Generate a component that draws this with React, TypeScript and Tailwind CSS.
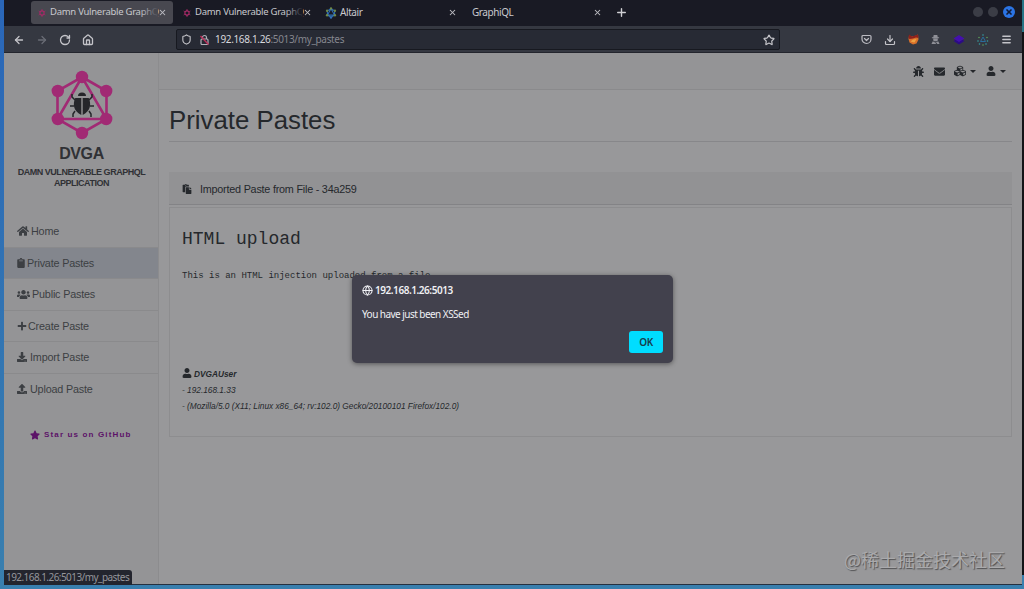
import type { ReactNode } from 'react';
import {
  FaBug,
  FaClipboard,
  FaCubes,
  FaDownload,
  FaEnvelope,
  FaHome,
  FaPaste,
  FaPlus,
  FaStar,
  FaUpload,
  FaUser,
  FaUsers,
} from 'react-icons/fa';
import { ArrowLeft, ArrowRight, Download, Globe, House, Menu, Plus, RotateCw, Shield, Star, X } from 'lucide-react';

const GraphMark = ({ size, colors }: { size: number; colors: string[] }) => (
  <svg width={size} height={size} viewBox="0 0 20 20" fill="none" stroke={colors[0]} strokeWidth="1.8">
    <path d="M10 3 16 6.5v7L10 17l-6-3.5v-7zM10 3 4 13.5h12z" />
    <g stroke="none">
      <circle cx="10" cy="2.5" r="2" fill={colors[1]} />
      <circle cx="16.5" cy="6.2" r="2" fill={colors[1]} />
      <circle cx="16.5" cy="13.8" r="2" fill={colors[1]} />
      <circle cx="10" cy="17.5" r="2" fill={colors[0]} />
      <circle cx="3.5" cy="13.8" r="2" fill={colors[1]} />
      <circle cx="3.5" cy="6.2" r="2" fill={colors[1]} />
    </g>
  </svg>
);

const HexDot = () => (
  <svg width="8" height="8" viewBox="0 0 20 20" fill="none" stroke="#a32a66" strokeWidth="3.2">
    <path d="M10 4 15 7v6l-5 3-5-3V7z" />
    <path d="M10 0v3M18.5 5l-3 2M18.5 15l-3-2M10 20v-3M1.5 15l3-2M1.5 5l3 2" strokeWidth="2" />
  </svg>
);

interface TabProps {
  title: string;
  icon?: ReactNode;
  active?: boolean;
  fade?: boolean;
}

const Tab = ({ title, icon, active, fade }: TabProps) => (
  <div className={`flex items-center w-[142px] h-[23px] mr-[3px] px-[6px] rounded-[3px] ${active ? 'bg-[#484850]' : ''}`}>
    {icon && <span className="w-[13px] shrink-0">{icon}</span>}
    <span className={`relative flex-1 min-w-0 whitespace-nowrap text-[#c9c9ce] ${fade ? 'text-[9.5px] tracking-[-0.27px]' : 'text-[10px] tracking-[-0.42px]'}`}>
      {title}
      {fade && <span className={`absolute right-0 top-0 w-[18px] h-full bg-linear-to-r from-transparent ${active ? 'to-[#484850]' : 'to-[#191a24]'}`} />}
    </span>
    <X size={9} strokeWidth={2.8} className="shrink-0 text-[#bdbdc3]" />
  </div>
);

const TabBar = () => (
  <div className="flex items-start h-[26px] pt-px pl-[27px] bg-[#191a24]">
    <Tab title="Damn Vulnerable GraphQ" icon={<span className="block pl-px"><HexDot /></span>} active fade />
    <Tab title="Damn Vulnerable GraphQ" icon={<span className="block pl-px"><HexDot /></span>} fade />
    <Tab title="Altair" icon={<span className="block -ml-[2px]"><GraphMark size={12} colors={['#2f6fb5', '#6f8a4a']} /></span>} />
    <Tab title="GraphiQL" />
    <Plus size={13} strokeWidth={2.6} className="mt-[5px] ml-[4px] text-[#d0d0d4]" />
    <div className="flex gap-[5px] ml-auto mt-[6px] mr-[7px]">
      <span className="size-[10px] rounded-full bg-[#3b3d46]" />
      <span className="size-[10px] rounded-full bg-[#3b3d46]" />
      <span className="flex items-center justify-center size-3 -mt-px rounded-full bg-[#2b74e4]">
        <X size={8} strokeWidth={5} className="text-[#111a33]" />
      </span>
    </div>
  </div>
);

const LockCrossed = () => (
  <svg width="11" height="12" viewBox="0 0 22 24" fill="none" stroke="#b0b0b8" strokeWidth="2.4">
    <rect x="4" y="10" width="14" height="11" rx="2" />
    <path d="M7 10V7a4 4 0 0 1 8 0v3" />
    <path d="m3 4 16 17" stroke="#c0305c" strokeWidth="2.8" />
  </svg>
);

const Pocket = () => (
  <svg width="11" height="11" viewBox="0 0 22 22" fill="none" stroke="#bcbcc2" strokeWidth="2.4" strokeLinecap="round" strokeLinejoin="round">
    <path d="M4 3h14a2 2 0 0 1 2 2v5a9 9 0 0 1-18 0V5a2 2 0 0 1 2-2z" />
    <path d="m7 9 4 4 4-4" />
  </svg>
);

const Fox = () => (
  <svg width="11" height="11" viewBox="0 0 22 22">
    <path d="M2 4 8 5 14 4 20 1 21 11 17 19 10 21 3 17 1 10z" fill="#d8702a" />
    <path d="m2 1 6 4 12-4 1 7-5-1-6 2-7 1-2-2z" fill="#8d211c" />
    <path d="m5 15 5-4 7-1-4 7z" fill="#eda243" />
  </svg>
);

const Spy = () => (
  <svg width="9" height="11" viewBox="0 0 20 22" fill="#8e8f96">
    <path d="M6 1h8l1 5h3v2H2V6h3zM5 9h10v4l-2 2h-6l-2-2zM1 21l3-6 6 3 6-3 3 6h-5l-2-3-2 3z" />
  </svg>
);

const Layers = () => (
  <svg width="12" height="11" viewBox="0 0 24 22">
    <path d="m12 8 11 6-11 7-11-7z" fill="#2c0b85" />
    <path d="m12 2 11 7-11 7L1 9z" fill="#4410ad" />
  </svg>
);

const SparkGraph = () => (
  <svg width="12" height="12" viewBox="0 0 24 24" fill="none" strokeWidth="2">
    <path d="m12 6 5 9H7z" stroke="#2a6c9c" />
    <g stroke="none" fill="#34a0a5">
      <circle cx="12" cy="2" r="1.6" />
      <circle cx="20" cy="7" r="1.6" fill="#5c9f5a" />
      <circle cx="21" cy="14" r="1.6" />
      <circle cx="18" cy="20" r="1.6" />
      <circle cx="12" cy="22" r="1.6" fill="#5c9f5a" />
      <circle cx="5" cy="20" r="1.6" />
      <circle cx="2" cy="14" r="1.6" />
      <circle cx="4" cy="7" r="1.6" fill="#5c9f5a" />
    </g>
  </svg>
);

const Toolbar = () => (
  <div className="flex items-center h-[27px] pt-px pl-[9px] pr-[10px] bg-[#353841] border-b border-[#23252d] text-[#c4c4c9]">
    <div className="flex items-center w-[163px] gap-[11px]">
      <ArrowLeft size={12} strokeWidth={2.6} />
      <ArrowRight size={12} strokeWidth={2.6} className="text-[#696c75]" />
      <RotateCw size={12} strokeWidth={2.6} />
      <House size={12} strokeWidth={2.6} />
    </div>
    <div className="flex items-center w-[604px] h-[21px] px-1 bg-[#272a34] border border-[#171920] rounded-[2px]">
      <Shield size={11} strokeWidth={2.4} />
      <span className="ml-[7px]"><LockCrossed /></span>
      <span className="ml-[5px] text-[10px] tracking-[-0.34px] text-[#85868e]">
        <span className="text-[#d8d8dc]">192.168.1.26</span>:5013/my_pastes
      </span>
      <Star size={12} strokeWidth={2.4} className="ml-auto" />
    </div>
    <div className="flex items-center justify-between ml-auto w-[151px]">
      <Pocket />
      <Download size={12} strokeWidth={2.4} />
      <Fox />
      <Spy />
      <Layers />
      <SparkGraph />
      <Menu size={11} strokeWidth={3} />
    </div>
  </div>
);

const Logo = () => (
  <div className="flex flex-col items-center h-[163px] pt-[17px] pl-px font-['Liberation_Sans',sans-serif] font-bold">
    <svg width="62" height="70" viewBox="0 0 62 70" fill="none" stroke="#a12a74" strokeWidth="2.6">
      <path d="M31 7 55.500 21v28L31 63 6.500 49V21zM31 7 6.500 49h49z" />
      <g fill="#a12a74" stroke="none">
        <circle cx="31" cy="7" r="6.200" />
        <circle cx="55.200" cy="21" r="6.200" />
        <circle cx="55.200" cy="49" r="6.200" />
        <circle cx="31" cy="63" r="6.200" />
        <circle cx="6.800" cy="49" r="6.200" />
        <circle cx="6.800" cy="21" r="6.200" />
      </g>
      <g stroke="#25262a" strokeWidth="1.500">
        <path d="m24 30-3-3v-3M38 30l3-3v-3M23 36h-4M39 36h4M24 41l-2 3v3M38 41l2 3v3" />
        <path d="M27 26a4 3.500 0 0 1 8 0z" fill="#25262a" stroke="none" />
        <path d="M30.300 28h-6c-2.500 5-2.500 13 6 17zM31.700 28h6c2.500 5 2.500 13-6 17z" fill="#25262a" stroke="none" />
      </g>
    </svg>
    <div className="mt-[5px] text-[16px] leading-[18px] tracking-[-0.4px] text-[#303135]">DVGA</div>
    <div className="mt-[4px] text-center whitespace-nowrap text-[9px] leading-[11px] tracking-[-0.47px] text-[#303135]">
      DAMN VULNERABLE GRAPHQL<br />APPLICATION
    </div>
  </div>
);

const links = [
  { label: 'Home', icon: <FaHome size={12} className="-mr-px" /> },
  { label: 'Private Pastes', icon: <FaClipboard size={10} className="-ml-px -mr-[2px]" />, active: true },
  { label: 'Public Pastes', icon: <FaUsers size={13} className="-mr-px" /> },
  { label: 'Create Paste', icon: <FaPlus size={10} className="-mr-[2px]" /> },
  { label: 'Import Paste', icon: <FaDownload size={10} /> },
  { label: 'Upload Paste', icon: <FaUpload size={10} /> },
];

const Sidebar = () => (
  <aside className="w-[155px] shrink-0 bg-[#949496] border-r border-[#8c8c8e]">
    <Logo />
    <nav>
      {links.map((link) => (
        <div
          key={link.label}
          className={`flex items-center gap-[3px] h-[31.5px] pl-[13px] text-[10.8px] tracking-[-0.18px] text-[#3c3f43] border-b border-[#8a8a8c] last:border-0 ${link.active ? 'bg-[#83868d]' : ''}`}
        >
          {link.icon}
          <span>{link.label}</span>
        </div>
      ))}
    </nav>
    <div className="flex items-center gap-1 mt-6 pl-[26px] text-[8px] font-bold tracking-[1.15px] text-[#5c1268]">
      <FaStar size={10} />
      <span>Star us on GitHub</span>
    </div>
  </aside>
);

const Caret = () => <span className="ml-[4px] border-x-[3px] border-x-transparent border-t-[3px] border-t-[#25272b]" />;

const Main = () => (
  <main className="flex-1 bg-[#98989a] text-[#25282c]">
    <div className="flex items-center h-[37px] justify-end pr-4 bg-[#949496] border-b border-[#8a8a8c]">
      <FaBug size={11} />
      <FaEnvelope size={11} className="ml-[10px]" />
      <FaCubes size={12} className="ml-[9px]" />
      <Caret />
      <FaUser size={10} className="ml-[10px]" />
      <Caret />
    </div>
    <div className="pl-[10px] pr-[10px]">
      <h1 className="h-[52px] pt-[14px] text-[25.8px] leading-[32px] border-b border-[#87878a]">Private Pastes</h1>
      <div className="flex items-center h-[33px] mt-[30px] pl-[13px] pt-[2px] bg-[#929294] border-b border-[#838386] text-[10.8px] tracking-[-0.22px]">
        <FaPaste size={10} />
        <span className="ml-2">Imported Paste from File - 34a259</span>
      </div>
      <div className="h-[230px] mt-[2px] pl-3 border border-[#8d8d8f]">
        <h2 className="mt-5 font-['Liberation_Mono',monospace] text-[18px] leading-[22px]">HTML upload</h2>
        <p className="mt-[19px] font-['Liberation_Mono',monospace] text-[9px] leading-[14px]">This is an HTML injection uploaded from a file.</p>
        <div className="mt-[83px] text-[8.3px] leading-[16px] italic">
          <div className="flex items-center gap-[2px] font-bold">
            <FaUser size={10} className="-mt-[2px]" />
            DVGAUser
          </div>
          <div>- 192.168.1.33</div>
          <div>- (Mozilla/5.0 (X11; Linux x86_64; rv:102.0) Gecko/20100101 Firefox/102.0)</div>
        </div>
      </div>
    </div>
  </main>
);

const AlertDialog = () => (
  <div className="absolute left-[352px] top-[275px] w-[321px] h-[88px] pt-2 px-[10px] rounded-[5px] bg-[#42414d] text-[#f0f0f4] shadow-[0_1px_5px_rgba(0,0,0,0.45)]">
    <div className="flex items-center gap-[2px] h-[15px] text-[10px] font-semibold tracking-[-0.45px]">
      <Globe size={11} strokeWidth={2.2} />
      192.168.1.26:5013
    </div>
    <p className="mt-[9px] text-[10px] leading-[15px] tracking-[-0.54px]">You have just been XSSed</p>
    <button className="block ml-auto mt-[9px] w-[34px] h-[22px] rounded-[3px] bg-[#00ddff] text-[10px] font-semibold tracking-[-0.3px] text-[#173c4c]">OK</button>
  </div>
);

const App = () => (
  <div className="relative w-[1024px] h-[589px] overflow-hidden bg-linear-to-b from-[#2a66b8] to-[#397fae] font-['Noto_Sans',sans-serif]">
    <div className="flex">
      <div className="flex flex-col w-[1018px] h-[585px] ml-[4px] border-b border-[#26303f]">
        <TabBar />
        <Toolbar />
        <div className="flex flex-1 font-['Liberation_Sans',sans-serif]">
          <Sidebar />
          <Main />
        </div>
      </div>
      <div className="flex-1 h-[575px] bg-[#121316] border-t-[32px] border-[#277586]" />
    </div>
    <AlertDialog />
    <div className="absolute left-[4px] top-[570px] h-[15px] w-[128px] pl-[2px] rounded-tr-[3px] bg-[#23252e] text-[10px] leading-[15px] tracking-[-0.56px] whitespace-nowrap text-[#95969c]">
      192.168.1.26:5013/my_pastes
    </div>
    <div className="absolute left-[844px] top-[546px] whitespace-nowrap text-[18px] leading-[26px] text-[#aaaaac] [text-shadow:1px_1px_1px_#505052] font-['Noto_Sans_CJK_SC',sans-serif]">
      @稀土掘金技术社区
    </div>
  </div>
);

export default App;
